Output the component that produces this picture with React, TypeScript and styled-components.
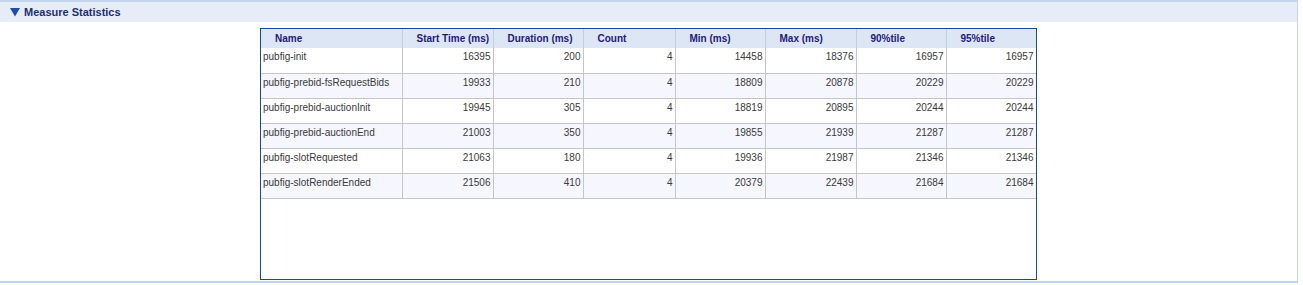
import React from "react";
import styled, { createGlobalStyle } from "styled-components";

const Global = createGlobalStyle`
  html, body { margin: 0; padding: 0; background: #ffffff; }
  body { font-family: "Liberation Sans", Arial, sans-serif; }
`;

const Panel = styled.section`
  width: 1297px;
  border-top: 2px solid #c3d4ef;
  border-right: 1px solid #c3d4ef;
  border-bottom: 2px solid #c3d4ef;
  background: #ffffff;
`;

const PanelHeader = styled.div`
  height: 20px;
  background: #e6edf9;
  display: flex;
  align-items: center;
  padding-left: 10px;
  gap: 4px;
  font-size: 11px;
  font-weight: bold;
  color: #1c2e78;
`;

const PanelBody = styled.div`
  display: flex;
  justify-content: center;
  padding: 6px 0 1px;
`;

const TableBox = styled.div`
  width: 775px;
  height: 250px;
  border: 1px solid #1747a6;
  overflow: hidden;
`;

const Table = styled.table`
  border-collapse: collapse;
  table-layout: fixed;
  width: 775px;
  font-family: "Liberation Sans", Arial, sans-serif;
  font-size: 10px;
`;

const Th = styled.th`
  height: 19px;
  padding: 0 0 0 14px;
  box-sizing: border-box;
  background: #dce6f4;
  color: #25197a;
  font-weight: bold;
  text-align: left;
  border-right: 1px solid #c9cfd8;
  &:last-child { border-right: none; }
`;

const Tr = styled.tr<{ $alt: boolean }>`
  background: ${(p) => (p.$alt ? "#f5f6fe" : "#ffffff")};
`;

const Td = styled.td<{ $num?: boolean }>`
  height: 25px;
  box-sizing: border-box;
  padding: 3px 2px 0;
  vertical-align: top;
  color: #3a3a3a;
  text-align: ${(p) => (p.$num ? "right" : "left")};
  border-right: 1px solid #c6c6c6;
  border-bottom: 1px solid #c6c6c6;
  white-space: nowrap;
  overflow: hidden;
`;

const Triangle = () => (
  <svg width="10" height="9" viewBox="0 0 10 9">
    <polygon points="0,0 10,0 5,8.5" fill="#1a4fae" />
  </svg>
);

const columns = [
  { label: "Name", w: 141 },
  { label: "Start Time (ms)", w: 91 },
  { label: "Duration (ms)", w: 90 },
  { label: "Count", w: 92 },
  { label: "Min (ms)", w: 90 },
  { label: "Max (ms)", w: 91 },
  { label: "90%tile", w: 90 },
  { label: "95%tile", w: 90 },
];

const rows: (string | number)[][] = [
  ["pubfig-init", 16395, 200, 4, 14458, 18376, 16957, 16957],
  ["pubfig-prebid-fsRequestBids", 19933, 210, 4, 18809, 20878, 20229, 20229],
  ["pubfig-prebid-auctionInit", 19945, 305, 4, 18819, 20895, 20244, 20244],
  ["pubfig-prebid-auctionEnd", 21003, 350, 4, 19855, 21939, 21287, 21287],
  ["pubfig-slotRequested", 21063, 180, 4, 19936, 21987, 21346, 21346],
  ["pubfig-slotRenderEnded", 21506, 410, 4, 20379, 22439, 21684, 21684],
];

export default function App() {
  return (
    <>
      <Global />
      <Panel>
        <PanelHeader>
          <Triangle />
          <span>Measure Statistics</span>
        </PanelHeader>
        <PanelBody>
          <TableBox>
            <Table>
              <colgroup>
                {columns.map((c) => (
                  <col key={c.label} style={{ width: c.w }} />
                ))}
              </colgroup>
              <thead>
                <tr>
                  {columns.map((c) => (
                    <Th key={c.label}>{c.label}</Th>
                  ))}
                </tr>
              </thead>
              <tbody>
                {rows.map((r, i) => (
                  <Tr key={i} $alt={i % 2 === 1}>
                    {r.map((v, j) => (
                      <Td key={j} $num={j > 0}>
                        {v}
                      </Td>
                    ))}
                  </Tr>
                ))}
              </tbody>
            </Table>
          </TableBox>
        </PanelBody>
      </Panel>
    </>
  );
}
